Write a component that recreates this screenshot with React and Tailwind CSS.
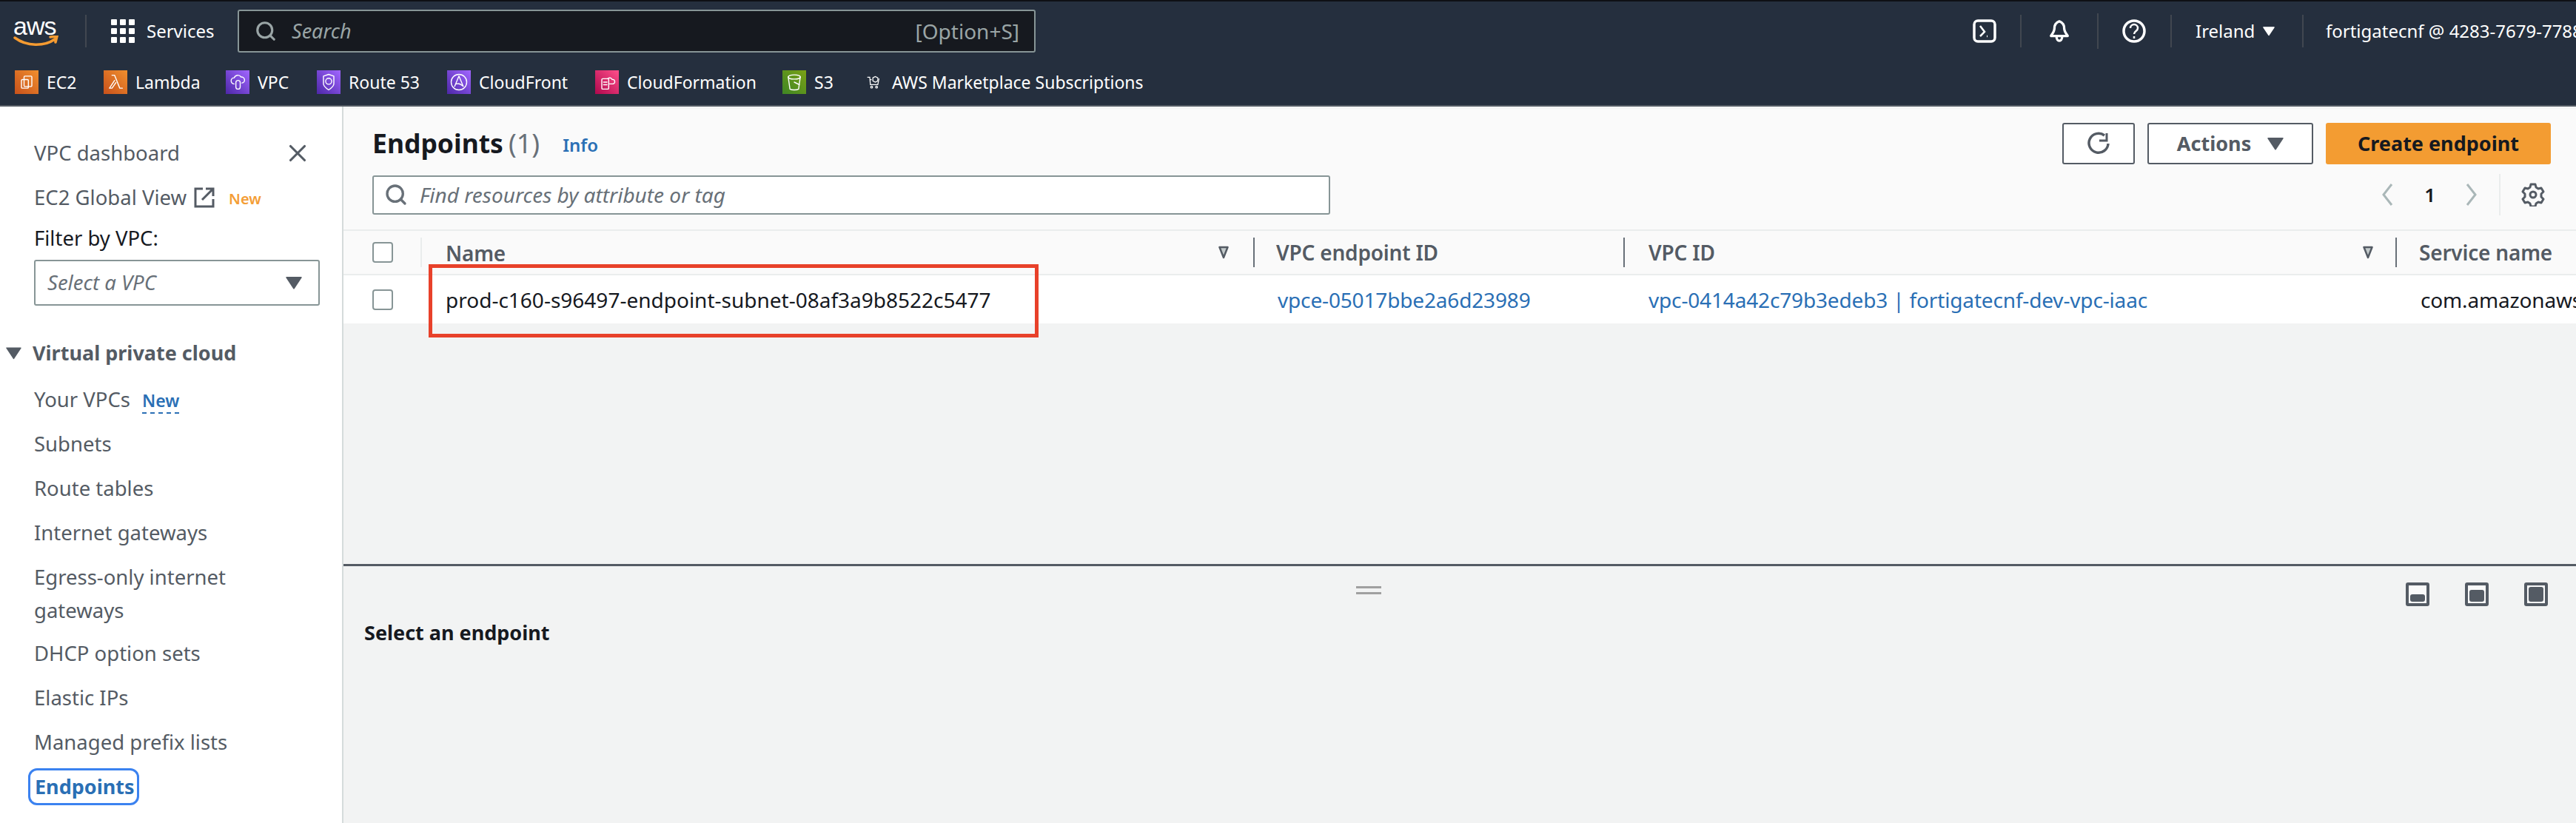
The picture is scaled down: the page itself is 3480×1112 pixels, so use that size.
import { Search, X } from "lucide-react";

const SANS = "font-['Noto_Sans',sans-serif]";

const Caret = ({ className }) => (
  <svg viewBox="0 0 20 16" className={className} fill="currentColor">
    <path d="M1 1.5h18L10 15z" stroke="currentColor" strokeWidth="1.5" strokeLinejoin="round" />
  </svg>
);

const SortCaret = () => (
  <svg viewBox="0 0 14 18" className="w-[14px] h-[18px]" fill="#c4cbcc" stroke="#545b64" strokeWidth="2.500" strokeLinejoin="round">
    <path d="M1.500 2h11L7 16z" />
  </svg>
);

const ServiceIcon = ({ from, to, children }) => (
  <span
    className="w-8 h-8 shrink-0 flex items-center justify-center"
    style={{ background: `linear-gradient(45deg, ${from}, ${to})` }}
  >
    <svg viewBox="0 0 24 24" className="w-7 h-7" fill="none" stroke="white" strokeWidth="1.2" strokeLinecap="round" strokeLinejoin="round">
      {children}
    </svg>
  </span>
);

const favorites = [
  {
    label: "EC2", from: "#c8511b", to: "#f08f2e", width: "w-[120px]",
    icon: <><rect x="9" y="5" width="9" height="12" rx="1" /><rect x="6" y="9" width="8" height="10" rx="1" /></>,
  },
  {
    label: "Lambda", from: "#c8511b", to: "#f08f2e", width: "w-[165px]",
    icon: <path d="M8 4h3l6 15h3M11 10l-6 9h3l4.500-6.500" />,
  },
  {
    label: "VPC", from: "#4d27a8", to: "#a166ff", width: "w-[123px]",
    icon: <><path d="M8 14a3.500 3.500 0 0 1 0-7 4.500 4.500 0 0 1 8-1 3.500 3.500 0 0 1 1 7" /><rect x="10" y="10" width="5" height="10" rx="2.500" /></>,
  },
  {
    label: "Route 53", from: "#4d27a8", to: "#a166ff", width: "w-[176px]",
    icon: <><path d="M12 3l6 2v9c0 3-3 5-6 7-3-2-6-4-6-7V5z" /><circle cx="12" cy="11" r="3.500" /></>,
  },
  {
    label: "CloudFront", from: "#4d27a8", to: "#a166ff", width: "w-[200px]",
    icon: <><circle cx="12" cy="12" r="9" /><path d="M7 17l5-12 5 12M9 14c3-1 5 0 7 2" /></>,
  },
  {
    label: "CloudFormation", from: "#b0084d", to: "#ff4f8b", width: "w-[253px]",
    icon: <><rect x="6" y="8" width="8" height="12" rx="1" /><path d="M8 12h4M8 15h4M13 8a3 3 0 0 1 5 1 2.500 2.500 0 0 1 1 5h-4" /></>,
  },
  {
    label: "S3", from: "#3f8624", to: "#7aa116", width: "w-[113px]",
    icon: <><ellipse cx="12" cy="6" rx="7" ry="2.500" /><path d="M5 6l2 14c2 1.300 8 1.300 10 0l2-14M12 12l6 3" /></>,
  },
];

const navLinks = ["Subnets", "Route tables", "Internet gateways"];
const navLinksLower = ["DHCP option sets", "Elastic IPs", "Managed prefix lists"];

const TopNav = () => (
  <header className="shrink-0 h-[144px] bg-[#252f3e] border-t-[2px] border-t-[#0e1014] border-b-[2px] border-b-[#545b64] text-white">
    <div className="h-[80px] flex items-center">
      <div className="w-[115px] pl-[18px] shrink-0 flex flex-col items-start">
        <span className="text-[34px] leading-[28px] font-['Liberation_Sans',sans-serif] tracking-[-1px]">aws</span>
        <svg viewBox="0 0 62 16" className="w-[62px] h-[16px] mt-[-1px]" fill="none" stroke="#f59b31" strokeWidth="3.500" strokeLinecap="round">
          <path d="M2 3c16 12 40 12 54 2M50 2l9-1-2 8" />
        </svg>
      </div>
      <span className="w-[2px] h-[44px] bg-[#414750] shrink-0" />
      <svg viewBox="0 0 32 32" className="w-8 h-8 ml-[33px] shrink-0" fill="white">
        {[0, 12, 24].flatMap((y) =>
          [0, 12, 24].map((x) => <rect key={`${x}-${y}`} x={x} y={y} width="8" height="8" rx="1" />)
        )}
      </svg>
      <span className="ml-[16px] w-[108px] text-[24px] shrink-0">Services</span>
      <div className="w-[1078px] h-[58px] ml-[15px] flex items-center bg-[#16191f] border-[2px] border-[#879596] rounded-[3px] pl-[21px] pr-[20px] text-[#9aa5a6] shrink-0">
        <Search className="w-[30px] h-[30px] shrink-0" strokeWidth={2.5} />
        <span className="ml-[20px] italic text-[27px]">Search</span>
        <span className="ml-auto text-[28px]">[Option+S]</span>
      </div>
      <svg viewBox="0 0 32 32" className="w-8 h-8 ml-[1266px] shrink-0" fill="none" stroke="white" strokeWidth="3.500">
        <rect x="2" y="2" width="28" height="28" rx="5" />
        <path d="M10 9l6 8-6 6M19 23h1" strokeWidth="2.500" />
      </svg>
      <span className="w-[2px] h-[44px] bg-[#414750] ml-[32px] shrink-0" />
      <svg viewBox="0 0 32 34" className="w-8 h-8 ml-[35px] shrink-0" fill="none" stroke="white" strokeWidth="3.500" strokeLinejoin="round">
        <path d="M16 3c-5 2-7 6-7 10 0 5-4 9-5 11h24c-1-2-5-6-5-11 0-4-2-8-7-10z" />
        <path d="M12 25c0 4 2 6 4 6s4-2 4-6" />
      </svg>
      <span className="w-[2px] h-[48px] bg-[#414750] ml-[35px] shrink-0" />
      <svg viewBox="0 0 32 32" className="w-8 h-8 ml-[32px] shrink-0" fill="none" stroke="white" strokeWidth="3.500">
        <circle cx="16" cy="16" r="14" />
        <path d="M11 12c0-3 2.500-5 5-5s5 2 5 5c0 4-5 4-5 8M16 23v3" strokeWidth="2.500" />
      </svg>
      <span className="w-[2px] h-[44px] bg-[#414750] ml-[33px] shrink-0" />
      <span className="ml-[32px] w-[78px] text-[24px] shrink-0">Ireland</span>
      <Caret className="w-[16px] h-[14px] ml-[13px] text-white shrink-0" />
      <span className="w-[2px] h-[44px] bg-[#414750] ml-[37px] shrink-0" />
      <span className="ml-[30px] text-[24px] whitespace-nowrap">fortigatecnf @ 4283-7679-7788</span>
    </div>
    <div className="h-[62px] pb-[4px] flex items-center pl-[20px]">
      {favorites.map((f) => (
        <div key={f.label} className={`flex items-center gap-[11px] shrink-0 ${f.width}`}>
          <ServiceIcon from={f.from} to={f.to}>{f.icon}</ServiceIcon>
          <span className="text-[23px] whitespace-nowrap">{f.label}</span>
        </div>
      ))}
      <svg viewBox="0 0 24 24" className="w-[20px] h-[24px] shrink-0" fill="none" stroke="white" strokeWidth="1.500">
        <path d="M2 4h4l1 12h12l2-10M6 8h3" />
        <path d="M11 5l4-2 4 2v5l-4 2-4-2z" />
        <circle cx="9" cy="20" r="1.500" />
        <circle cx="17" cy="20" r="1.500" />
      </svg>
      <span className="ml-[15px] text-[23px] whitespace-nowrap">AWS Marketplace Subscriptions</span>
    </div>
  </header>
);

const NavItem = ({ children }) => (
  <div className="h-[60px] pl-[46px] flex items-center text-[#545b64]">{children}</div>
);

const Sidebar = () => (
  <aside className="w-[464px] shrink-0 bg-white border-r-[2px] border-r-[#d5dbdb] pt-[33px] text-[27.5px]">
    <div className="h-[60px] pl-[46px] pr-[41px] flex items-center justify-between text-[#545b64]">
      <span>VPC dashboard</span>
      <X className="w-[38px] h-[38px]" strokeWidth={2} />
    </div>
    <NavItem>
      <span>EC2 Global View</span>
      <svg viewBox="0 0 28 28" className="w-[28px] h-[28px] ml-[10px]" fill="none" stroke="#545b64" strokeWidth="3">
        <path d="M12 2H2v24h24V16M16 2h10v10M26 2L11 17" />
      </svg>
      <span className="ml-[19px] mt-[4px] text-[#f49e36] text-[20px] font-semibold">New</span>
    </NavItem>
    <div className="h-[50px] pl-[46px] flex items-center text-[#16191f]">Filter by VPC:</div>
    <div className="mt-[4px] ml-[46px] w-[386px] h-[62px] border-[2px] border-[#879596] rounded-[3px] bg-white pl-[16px] pr-[22px] flex items-center justify-between">
      <span className="italic text-[#687078]">Select a VPC</span>
      <Caret className="w-[22px] h-[18px] text-[#545b64]" />
    </div>
    <div className="h-[60px] mt-[34px] pl-[8px] flex items-center">
      <Caret className="w-[21px] h-[18px] text-[#545b64]" />
      <span className="ml-[15px] font-bold text-[#545b64] text-[27px]">Virtual private cloud</span>
    </div>
    <div className="h-[60px] mt-[3px] pl-[46px] flex items-center text-[#545b64]">
      <span>Your VPCs</span>
      <span className="ml-[16px] mt-[4px] text-[#2a6fb5] text-[23px] font-semibold border-b-[2px] border-dashed border-[#2a6fb5] leading-[32px]">New</span>
    </div>
    {navLinks.map((label) => (
      <NavItem key={label}>{label}</NavItem>
    ))}
    <div className="h-[103px] pt-[7px] pl-[46px] pr-[60px] leading-[45px] text-[#545b64]">Egress-only internet gateways</div>
    {navLinksLower.map((label) => (
      <NavItem key={label}>{label}</NavItem>
    ))}
    <div className="h-[60px] pl-[38px] flex items-center">
      <span className="h-[50px] pl-[6px] pr-[3px] flex items-center border-[3px] border-[#3b82f0] rounded-[12px] font-bold text-[#2a6fb5] text-[27px]">Endpoints</span>
    </div>
  </aside>
);

const Checkbox = () => (
  <span className="block shrink-0 w-[28px] h-[28px] border-[2px] border-[#879596] rounded-[4px] bg-white" />
);

const ColSep = () => <span className="w-[2px] h-[40px] bg-[#687078] shrink-0" />;

const EndpointTable = () => (
  <div className="relative">
    <div className="h-[62px] bg-[#fafafa] border-y-[2px] border-[#eaeded] flex items-center text-[28px] tracking-[-0.2px] font-semibold text-[#545b64] whitespace-nowrap">
      <div className="w-[39px] shrink-0" />
      <Checkbox />
      <div className="ml-[37px] w-[2px] h-[40px] bg-[#eaeded] shrink-0" />
      <div className="w-[1123px] shrink-0 pl-[32px] flex items-center justify-between pr-[33px]">
        <span className="mt-[2px]">Name</span>
        <SortCaret />
      </div>
      <ColSep />
      <div className="w-[498px] shrink-0 pl-[29px]">VPC endpoint ID</div>
      <ColSep />
      <div className="w-[1041px] shrink-0 pl-[32px] pr-[30px] flex items-center justify-between">
        <span>VPC ID</span>
        <SortCaret />
      </div>
      <ColSep />
      <div className="pl-[30px]">Service name</div>
    </div>
    <div className="h-[65px] bg-white flex items-center text-[28px] tracking-[-0.16px] whitespace-nowrap">
      <div className="w-[39px] shrink-0" />
      <Checkbox />
      <div className="ml-[39px] w-[1125px] shrink-0 pl-[32px] text-[#16191f] tracking-normal">prod-c160-s96497-endpoint-subnet-08af3a9b8522c5477</div>
      <div className="w-[500px] shrink-0 pl-[31px] text-[#2a6fb5]">vpce-05017bbe2a6d23989</div>
      <div className="w-[1043px] shrink-0 pl-[32px] text-[#2a6fb5]">vpc-0414a42c79b3edeb3 | fortigatecnf-dev-vpc-iaac</div>
      <div className="pl-[32px] text-[#16191f]">com.amazonaws.eu-west-1</div>
    </div>
    <div className="absolute left-[115px] top-[47px] w-[824px] h-[99px] border-[5px] border-[#e8412a]" />
  </div>
);

const PanelIcon = ({ inner }) => (
  <span className="w-8 h-8 rounded-[3px] border-[4px] border-[#545b64] bg-[#fafafa] flex items-end justify-center p-[2px]">
    <span className={`w-full rounded-[3px] bg-[#545b64] ${inner}`} />
  </span>
);

const App = () => (
  <div className={`w-[3480px] h-[1112px] overflow-hidden flex flex-col ${SANS}`}>
    <TopNav />
    <div className="flex-1 flex min-h-0">
      <Sidebar />
      <main className="flex-1 min-w-0 flex flex-col bg-[#f2f3f3] overflow-hidden">
        <div className="h-[166px] shrink-0 bg-[#fafafa] border-t-[3px] border-t-[#f4f5f5] pl-[39px] pr-[34px]">
          <div className="pt-[19px] flex items-center justify-between">
            <div className="flex items-center">
              <span className="text-[35.5px] font-bold text-[#16191f]">Endpoints</span>
              <span className="ml-[7px] text-[36px] text-[#687078]">(1)</span>
              <span className="ml-[31px] mt-[4px] text-[24px] font-semibold text-[#2a6fb5]">Info</span>
            </div>
            <div className="flex items-center gap-[17px]">
              <button className="w-[98px] h-[56px] bg-white border-[2px] border-[#545b64] rounded-[3px] flex items-center justify-center">
                <svg viewBox="0 0 32 32" className="w-8 h-8" fill="none" stroke="#545b64" strokeWidth="3.500">
                  <path d="M24 5a13 13 0 1 0 5 11" />
                  <path d="M27 2v10H17" strokeWidth="3" />
                </svg>
              </button>
              <button className="w-[224px] h-[56px] bg-white border-[2px] border-[#545b64] rounded-[3px] flex items-center justify-center gap-[22px] text-[#545b64] text-[27px] font-bold">
                Actions
                <Caret className="w-[22px] h-[18px]" />
              </button>
              <button className="w-[304px] h-[56px] bg-[#f39c32] rounded-[3px] text-[#16191f] text-[27px] font-bold">
                Create endpoint
              </button>
            </div>
          </div>
          <div className="mt-[13px] flex items-center justify-between">
            <div className="w-[1294px] h-[53px] bg-white border-[2px] border-[#879596] rounded-[3px] pl-[14px] flex items-center">
              <Search className="w-[32px] h-[32px] text-[#687078]" strokeWidth={2.5} />
              <span className="ml-[16px] italic text-[28px] text-[#687078]">Find resources by attribute or tag</span>
            </div>
            <div className="flex items-center h-[56px] pr-[8px]">
              <svg viewBox="0 0 18 32" className="w-[18px] h-[32px]" fill="none" stroke="#aab7b8" strokeWidth="3"><path d="M15 2L4 16l11 14" /></svg>
              <span className="ml-[41px] text-[26px] font-semibold text-[#16191f]">1</span>
              <svg viewBox="0 0 18 32" className="ml-[40px] w-[18px] h-[32px]" fill="none" stroke="#aab7b8" strokeWidth="3"><path d="M3 2l11 14L3 30" /></svg>
              <span className="ml-[28px] w-[2px] h-[56px] bg-[#eaeded]" />
              <svg viewBox="0 0 32 32" className="ml-[28px] w-8 h-8" fill="none" stroke="#545b64" strokeWidth="3" strokeLinejoin="round">
                <path d="M13 2h6l1 4 3 2 4-1 3 5-3 3v4l3 3-3 5-4-1-3 2-1 4h-6l-1-4-3-2-4 1-3-5 3-3v-4L2 12l3-5 4 1 3-2z" />
                <circle cx="16" cy="16" r="4" />
              </svg>
            </div>
          </div>
        </div>
        <EndpointTable />
        <div className="flex-1 flex flex-col justify-end">
          <div className="h-[350px] border-t-[3px] border-t-[#545b64] relative">
            <div className="h-[38px] w-[2770px] flex flex-col items-center justify-end gap-[5px]">
              <span className="w-[34px] h-[3px] bg-[#a0a0a0]" />
              <span className="w-[34px] h-[3px] bg-[#a0a0a0]" />
            </div>
            <div className="absolute right-[38px] top-[22px] flex gap-[48px]">
              <PanelIcon inner="h-[10px]" />
              <PanelIcon inner="h-[16px]" />
              <PanelIcon inner="h-full" />
            </div>
            <div className="mt-[32px] pl-[28px] text-[27px] font-bold text-[#16191f]">Select an endpoint</div>
          </div>
        </div>
      </main>
    </div>
  </div>
);

export default App;
